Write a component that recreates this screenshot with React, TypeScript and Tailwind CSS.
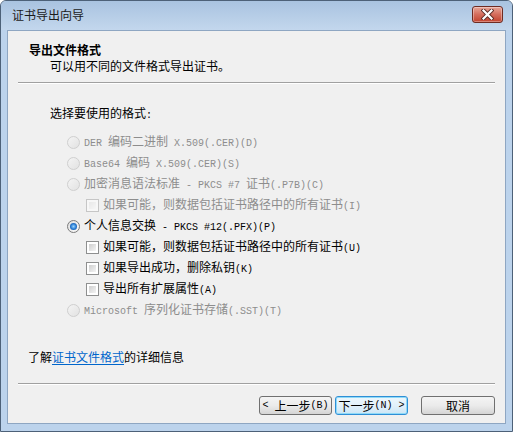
import React from "react";

// 拆分中英文：西文部分用等宽小字（模拟宋体点阵）
function Txt({ s }: { s: string }) {
  const parts = s.split(/([\x00-\xff]+)/).filter((p) => p !== "");
  return (
    <>
      {parts.map((p, i) =>
        /^[\x00-\xff]+$/.test(p) ? (
          <span key={i} className="font-['Liberation_Mono',monospace] text-[10px] whitespace-pre">
            {p}
          </span>
        ) : (
          <span key={i}>{p}</span>
        ),
      )}
    </>
  );
}

function Radio({ checked, disabled }: { checked?: boolean; disabled?: boolean }) {
  if (disabled) {
    return (
      <span className="w-[13px] h-[13px] shrink-0 rounded-full border border-[#cfcfcf] bg-linear-to-br from-[#f4f4f4] to-[#e2e2e2]" />
    );
  }
  return (
    <span className="w-[13px] h-[13px] shrink-0 rounded-full border border-[#7b7b7b] bg-linear-to-br from-[#dedede] to-[#fbfbfb] grid place-items-center">
      {checked && <span className="w-[7px] h-[7px] rounded-full bg-radial from-[#9ad4fa] via-[#2a7fd6] to-[#0b3f8c]" />}
    </span>
  );
}

function Check({ disabled }: { disabled?: boolean }) {
  return (
    <span
      className={
        disabled
          ? "w-[13px] h-[13px] shrink-0 border border-[#c6c6c6] bg-[#f7f7f7] p-[2px]"
          : "w-[13px] h-[13px] shrink-0 border border-[#8e8f8f] bg-white p-[2px]"
      }
    >
      <span
        className={
          disabled
            ? "block w-full h-full bg-linear-to-br from-[#e8e8e8] to-[#f6f6f6]"
            : "block w-full h-full bg-linear-to-br from-[#cfcfcf] to-[#f4f4f4]"
        }
      />
    </span>
  );
}

const opcoes = [
  { tipo: "radio", texto: "DER 编码二进制 X.509(.CER)(D)", off: true },
  { tipo: "radio", texto: "Base64 编码 X.509(.CER)(S)", off: true },
  { tipo: "radio", texto: "加密消息语法标准 - PKCS #7 证书(.P7B)(C)", off: true },
  { tipo: "check", texto: "如果可能，则数据包括证书路径中的所有证书(I)", off: true },
  { tipo: "radio", texto: "个人信息交换 - PKCS #12(.PFX)(P)", checked: true },
  { tipo: "check", texto: "如果可能，则数据包括证书路径中的所有证书(U)" },
  { tipo: "check", texto: "如果导出成功，删除私钥(K)" },
  { tipo: "check", texto: "导出所有扩展属性(A)" },
  { tipo: "radio", texto: "Microsoft 序列化证书存储(.SST)(T)", off: true },
];

export default function App() {
  return (
    <div className="w-[513px] h-[432px] flex flex-col bg-[#bcd3ec] border border-[#4d6178] rounded-t-[6px] overflow-hidden font-['Noto_Sans_CJK_SC',sans-serif] text-[12px] leading-[16px] text-black">
      {/* 标题栏 */}
      <div className="h-[29px] shrink-0 flex items-center justify-between pl-[11px] pr-[9px] bg-linear-to-b from-[#a9c3e0] to-[#c3d7ed]">
        <span className="text-[12px] text-[#1b1b1b] -mt-[1px]">证书导出向导</span>
        <button
          type="button"
          className="w-[31px] h-[17px] -mt-[3px] rounded-[3px] border border-[#6e2b22] bg-linear-to-b from-[#e6a699] via-[#d46c5c] to-[#c2412d] grid place-items-center shadow-[inset_0_0_0_1px_rgba(255,255,255,0.35)]"
        >
          <svg width="13" height="11" viewBox="0 0 13 11">
            <path d="M2.5 1.5 L10.5 9.5 M10.5 1.5 L2.5 9.5" stroke="#5a2a24" strokeWidth="4" strokeLinecap="square" />
            <path d="M2.5 1.5 L10.5 9.5 M10.5 1.5 L2.5 9.5" stroke="#ffffff" strokeWidth="2.2" strokeLinecap="square" />
          </svg>
        </button>
      </div>

      {/* 客户区 */}
      <div className="mx-[6px] mb-[7px] flex-1 flex flex-col bg-[#f0f0f0] border border-[#8ea6c2]">
        <div className="pt-[11px] pl-[21px]">
          <div className="font-bold">导出文件格式</div>
          <div className="pl-[21px]">可以用不同的文件格式导出证书。</div>
        </div>
        <div className="mt-[8px] ml-[10px] mr-[10px] h-[2px] border-t border-[#a0a0a0] border-b border-b-white" />

        <div className="mt-[21px] pl-[42px]">
          <Txt s="选择要使用的格式:" />
        </div>

        <div className="mt-[8px] pl-[59px] flex flex-col">
          {opcoes.map((o, i) => (
            <div
              key={i}
              className={`h-[21px] flex items-center gap-[4px] ${o.tipo === "check" ? "pl-[19px]" : ""} ${
                o.off ? "text-[#8d8d8d]" : "text-black"
              }`}
            >
              {o.tipo === "radio" ? <Radio checked={o.checked} disabled={o.off} /> : <Check disabled={o.off} />}
              <span>
                <Txt s={o.texto} />
              </span>
            </div>
          ))}
        </div>

        <div className="mt-[28px] pl-[20px]">
          了解<span className="text-[#0066cc] underline underline-offset-2">证书文件格式</span>的详细信息
        </div>

        <div className="mt-[18px] ml-[10px] mr-[10px] h-[2px] border-t border-[#a0a0a0] border-b border-b-white" />

        <div className="mt-[11px] flex justify-end pr-[10px] gap-[3px]">
          <button
            type="button"
            className="w-[73px] h-[19px] rounded-[3px] border border-[#707070] bg-linear-to-b from-[#f4f4f4] via-[#ebebeb] to-[#d5d5d5] flex items-center justify-center leading-none"
          >
            <Txt s="< 上一步(B)" />
          </button>
          <button
            type="button"
            className="w-[73px] h-[19px] rounded-[3px] border border-[#2f8fd6] shadow-[inset_0_0_0_1px_#8fdaf8] bg-linear-to-b from-[#eef7fc] via-[#e2f1fa] to-[#cde6f6] flex items-center justify-center leading-none"
          >
            <Txt s="下一步(N) >" />
          </button>
          <button
            type="button"
            className="ml-[10px] w-[74px] h-[19px] rounded-[3px] border border-[#707070] bg-linear-to-b from-[#f4f4f4] via-[#ebebeb] to-[#d5d5d5] flex items-center justify-center leading-none"
          >
            取消
          </button>
        </div>
      </div>
    </div>
  );
}
